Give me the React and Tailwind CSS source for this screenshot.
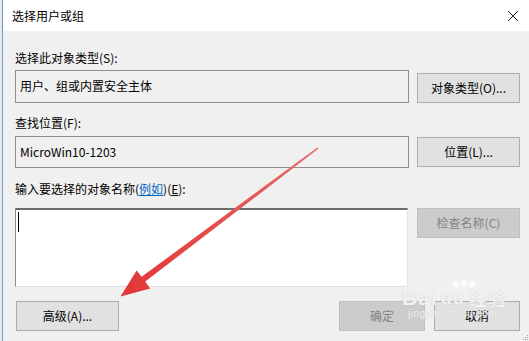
import React from 'react';

const font = { fontFamily: '"Noto Sans CJK SC", "Microsoft YaHei", "Liberation Sans", sans-serif' };

function Btn({ children, disabled, className = '' }) {
  return (
    <div
      className={`flex items-center justify-center text-[12px] border ${
        disabled ? 'bg-[#cccccc] border-[#bfbfbf] text-[#838383]' : 'bg-[#e1e1e1] border-[#adadad] text-black'
      } ${className}`}
    >
      {children}
    </div>
  );
}

function ReadBox({ children, className = '' }) {
  return (
    <div className={`w-[394px] border border-[#8f8f8f] bg-[#f0f0f0] pl-[4px] text-[12px] text-black leading-[16px] ${className}`}>
      {children}
    </div>
  );
}

function Arrow() {
  return (
    <svg className="absolute left-0 top-0 pointer-events-none" width="529" height="341" viewBox="0 0 529 341">
      <defs>
        <linearGradient id="ar" x1="318" y1="148" x2="121" y2="296" gradientUnits="userSpaceOnUse">
          <stop offset="0" stopColor="#e66a6a" />
          <stop offset="1" stopColor="#e33535" />
        </linearGradient>
      </defs>
      <polygon
        points="318.6,148.6 145.2,281.6 150.2,288.4 120.5,296.5 136.6,270.4 141.6,276.8 317.4,147.4"
        fill="url(#ar)"
      />
    </svg>
  );
}

function Watermark() {
  return (
    <div className="absolute left-[402px] top-[281px] pointer-events-none select-none">
      <div className="flex justify-center gap-[2px] ml-[20px]">
        <span className="w-[6px] h-[7px] rounded-full bg-white/70" />
        <span className="w-[6px] h-[8px] rounded-full bg-white/70 -mt-[2px]" />
        <span className="w-[6px] h-[7px] rounded-full bg-white/70" />
      </div>
      <div
        className="flex items-end text-[21px] leading-[20px] font-bold text-white/80 tracking-[1px]"
        style={{ fontFamily: '"Liberation Sans", "Noto Sans CJK SC", sans-serif', textShadow: '0 0 1px #b8b8b8' }}
      >
        <span>Bai</span>
        <span className="text-[18px] ml-[3px]">du</span>
        <span className="text-[18px] ml-[4px]" style={font}>经验</span>
      </div>
      <div
        className="text-[10px] leading-[12px] text-white/80 tracking-[0.5px] ml-[6px]"
        style={{ fontFamily: '"Liberation Sans", sans-serif', textShadow: '0 0 1px #b8b8b8' }}
      >
        jingyan.baidu.com
      </div>
    </div>
  );
}

export default function App() {
  return (
    <div className="relative w-[529px] h-[341px] overflow-hidden bg-[#e8e8e8] pl-[2px]" style={font}>
      <div className="h-full border-l border-[#6f9bd0] bg-[#f0f0f0] flex flex-col">
        <div className="h-[31px] bg-white flex items-center justify-between pl-[9px] pr-[9px]">
          <span className="text-[12px] text-black">选择用户或组</span>
          <svg width="12" height="12" viewBox="0 0 12 12" className="mr-[1px]">
            <path d="M1 1 L11 11 M11 1 L1 11" stroke="#222" strokeWidth="1" fill="none" />
          </svg>
        </div>

        <div className="flex flex-col pl-[12px] pt-[19px] text-[12px] leading-[16px]">
          <div className="text-black">选择此对象类型(S):</div>
          <div className="flex items-start gap-[8px] mt-[4px]">
            <ReadBox className="h-[33px] pt-[7px]">用户、组或内置安全主体</ReadBox>
            <Btn className="w-[103px] h-[30px] mt-[3px]">对象类型(O)...</Btn>
          </div>

          <div className="text-black mt-[12px]">查找位置(F):</div>
          <div className="flex items-start gap-[8px] mt-[5px]">
            <ReadBox className="h-[32px] pt-[7px]">MicroWin10-1203</ReadBox>
            <Btn className="w-[103px] h-[30px] mt-[1px]">位置(L)...</Btn>
          </div>

          <div className="text-black mt-[13px]">
            输入要选择的对象名称(
            <span className="text-[#0066cc] underline">例如</span>
            )(<span className="underline">E</span>):
          </div>
          <div className="flex items-start gap-[9px] mt-[11px]">
            <div className="w-[393px] h-[79px] bg-white border-t-2 border-l border-t-[#6d6d6d] border-l-[#8a8a8a] border-r border-b border-r-[#e3e3e3] border-b-[#e3e3e3] pl-[2px] pt-[2px]">
              <div className="w-[1px] h-[20px] bg-black" />
            </div>
            <Btn disabled className="w-[103px] h-[30px]">检查名称(C)</Btn>
          </div>

          <div className="flex items-center mt-[14px]">
            <Btn className="w-[103px] h-[30px] ml-[1px]">高级(A)...</Btn>
            <div className="flex-1" />
            <Btn disabled className="w-[86px] h-[30px]">确定</Btn>
            <Btn className="w-[86px] h-[30px] ml-[9px] mr-[9px]">取消</Btn>
          </div>
        </div>
      </div>

      <div className="absolute right-[1px] bottom-[1px] grid grid-cols-3 gap-[1px]">
        <span />
        <span />
        <span className="w-[1px] h-[1px] bg-[#a0a0a0]" />
        <span />
        <span className="w-[1px] h-[1px] bg-[#a0a0a0]" />
        <span className="w-[1px] h-[1px] bg-[#a0a0a0]" />
        <span className="w-[1px] h-[1px] bg-[#a0a0a0]" />
        <span className="w-[1px] h-[1px] bg-[#a0a0a0]" />
        <span className="w-[1px] h-[1px] bg-[#a0a0a0]" />
      </div>

      <Arrow />
      <Watermark />
    </div>
  );
}
